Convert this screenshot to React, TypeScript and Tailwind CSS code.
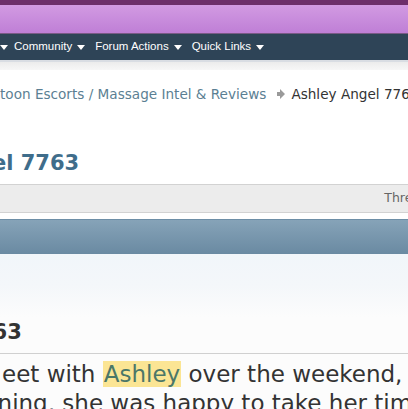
import { ReactNode } from "react";

const navItems = ["Community", "Forum Actions", "Quick Links"];

function Caret() {
  return (
    <svg width="8" height="5" viewBox="0 0 8 5" className="ml-[5px] mt-[1px]">
      <path d="M0 0h8L4 5z" fill="#ffffff" />
    </svg>
  );
}

function NavItem({ children }: { children: ReactNode }) {
  return (
    <div className="flex items-center pr-[10px]">
      <span>{children}</span>
      <Caret />
    </div>
  );
}

export default function App() {
  return (
    <div className="h-[409px] w-[408px] overflow-hidden bg-white">
      {/* Top header band */}
      <div className="h-[5px] bg-[#6d2f6a]" />
      <div className="h-[28px] bg-gradient-to-b from-[#d29ae2] to-[#bf7fd6]" />
      <div className="h-[1px] bg-[#7a5a86]" />

      {/* Navbar */}
      <div className="flex h-[26px] items-center bg-[#2e4457] font-['Liberation_Sans',Arial,sans-serif] text-[11.5px] text-white">
        <div className="mr-[6px] ml-[-5px] flex items-center">
          <Caret />
        </div>
        {navItems.map((item) => (
          <NavItem key={item}>{item}</NavItem>
        ))}
      </div>
      <div className="h-[2px] bg-[#d9dde3]" />
      <div className="h-[8px] bg-gradient-to-b from-[#ececec] to-[#f7f7f7]" />

      {/* Breadcrumb */}
      <div className="flex h-[48px] items-center whitespace-nowrap font-['DejaVu_Sans',Verdana,sans-serif] text-[13.6px]">
        <span className="text-[#5b7f93]">toon Escorts / Massage Intel &amp; Reviews</span>
        <svg width="9" height="12" viewBox="0 0 9 12" className="ml-[10px] mr-[6px] shrink-0">
          <path d="M1 4h3V1l5 5-5 5V8H1z" fill="#9a9a9a" />
        </svg>
        <span className="text-[#333333]">Ashley Angel 7763</span>
      </div>

      {/* Thread title */}
      <div className="flex h-[66px] items-center whitespace-nowrap pt-[26px]">
        <h1 className="ml-[-8px] font-['DejaVu_Sans',Verdana,sans-serif] text-[21px] font-bold text-[#3f6d8b]">
          el 7763
        </h1>
      </div>

      {/* Thread tools bar */}
      <div className="flex h-[29px] items-center justify-end border-y border-[#d2d2d2] bg-[#ececec] font-['DejaVu_Sans',Verdana,sans-serif] text-[12.5px] text-[#666666]">
        <span className="mr-[-20px]">Thread</span>
      </div>

      <div className="h-[6px]" />

      {/* Post header */}
      <div className="h-[35px] border-t border-[#6d8ea6] bg-gradient-to-b from-[#86a3b8] to-[#6a8aa2]" />

      {/* Post title area */}
      <div className="h-[63px] bg-gradient-to-b from-[#f1f6fa] via-[#f4f7fa] to-[#fcfcfc]" />
      <div className="flex h-[36px] items-center bg-[#fcfcfc] pb-[4px]">
        <h2 className="ml-[-22px] font-['DejaVu_Sans',Verdana,sans-serif] text-[21px] font-bold text-[#333333]">
          763
        </h2>
      </div>
      <div className="h-[1px] bg-[#d0d0d0]" />

      {/* Post body */}
      <div className="bg-[#fcfcfc] pt-[6px] font-['DejaVu_Sans',Verdana,sans-serif] text-[23px] leading-[29px] whitespace-nowrap text-[#333333]">
        <div className="ml-[2px]">
          eet with{" "}
          <span className="bg-[#fbe594] px-[1px] text-[#4b7768]">Ashley</span>{" "}
          over the weekend,
        </div>
        <div className="ml-[-17px]">nning, she was happy to take her time</div>
      </div>
    </div>
  );
}
